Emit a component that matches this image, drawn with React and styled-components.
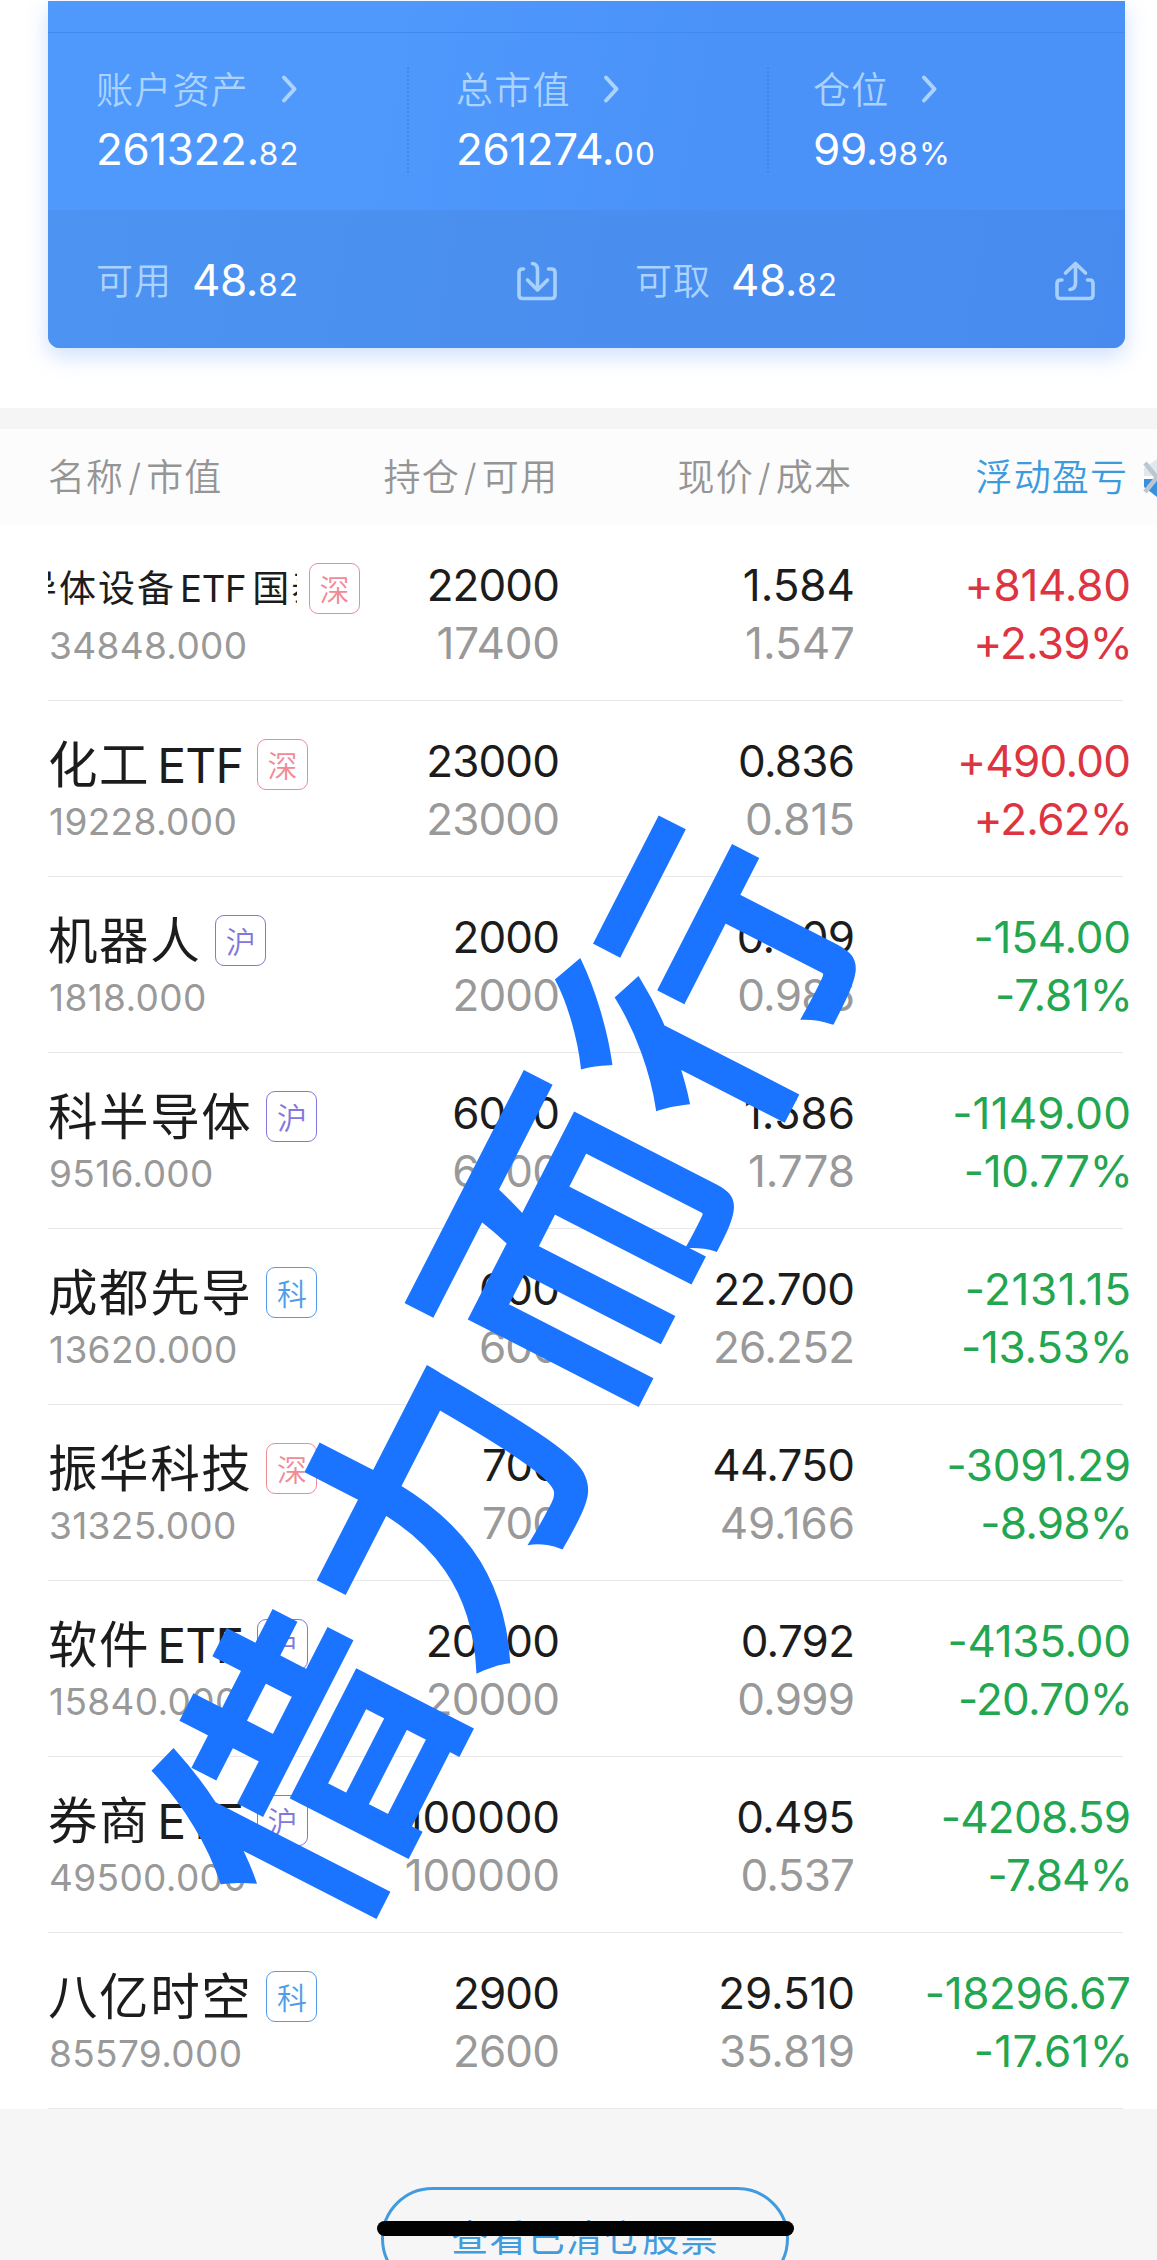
import React from "react";
import styled, { createGlobalStyle } from "styled-components";

const GlobalStyle = createGlobalStyle`
  *, *::before, *::after { box-sizing: border-box; }
  html, body { margin: 0; padding: 0; background: #fff; }
  body { overflow: hidden; }
`;

const Screen = styled.main`
  position: relative;
  width: 1157px;
  height: 2260px;
  overflow: hidden;
  display: flex;
  flex-direction: column;
  background: #f6f6f6;
  font-family: Inter, "Noto Sans CJK SC", sans-serif;
  color: #1c1c1c;
  white-space: nowrap;
`;

const Summary = styled.section`
  height: 408px;
  flex: none;
  padding: 1px 32px 0 48px;
  background: #fff;
`;

const Card = styled.div`
  height: 347px;
  border-radius: 0 0 12px 12px;
  overflow: hidden;
  background: linear-gradient(100deg, #4f99fd 0%, #4f98fc 30%, #4a92f8 60%, #4a91f8 100%);
  box-shadow: 0 8px 22px rgba(74, 140, 245, 0.28);
`;

const CardStrip = styled.div`
  height: 32px;
  border-bottom: 1px solid #4389ec;
`;

const Stats = styled.div`
  height: 177px;
  display: grid;
  grid-template-columns: 361px 360px 1fr;
  padding-top: 34px;
`;

const Stat = styled.div`
  height: 106px;
  padding-left: ${(p) => p.$inset}px;
  display: flex;
  flex-direction: column;
  border-right: ${(p) => (p.$last ? "0" : "2px dotted rgba(50, 120, 225, 0.5)")};
`;

const StatLabel = styled.div`
  display: flex;
  align-items: center;
  height: 42px;
  font-size: 37px;
  font-weight: 350;
  letter-spacing: 1.2px;
  color: #abd3fe;
  svg { margin-left: 32px; margin-top: 2px; }
`;

const Amount = styled.div`
  font-size: 44px;
  line-height: 50px;
  letter-spacing: -0.4px;
  color: #fff;
  padding-top: ${(p) => p.$top || 0}px;
  small { font-size: 31.5px; letter-spacing: 1px; }
`;

const Funds = styled.div`
  height: 138px;
  display: grid;
  grid-template-columns: 539px 1fr;
  background: linear-gradient(100deg, #4c93f2 0%, #4a8fee 45%, #488bf0 100%);
`;

const Fund = styled.div`
  display: flex;
  align-items: center;
  padding: 3px 30px 0 48px;
  svg { margin-left: auto; }
`;

const FundLabel = styled.span`
  width: 96px;
  font-size: 37px;
  line-height: 50px;
  padding-top: 2px;
  font-weight: 350;
  letter-spacing: 1.1px;
  color: #abd3fe;
`;

const Divider = styled.div`
  height: 21px;
  flex: none;
  background: #f5f5f5;
`;

const columns = "312px 199px 295px 276px";

const TableHead = styled.div`
  height: 96px;
  flex: none;
  display: grid;
  grid-template-columns: ${columns} 1fr;
  align-items: center;
  padding: 0 0 4px 48px;
  background: #fcfcfc;
  font-size: 37px;
  font-weight: 350;
  letter-spacing: 1.1px;
  color: #959595;
`;

const HeadCell = styled.div`
  text-align: ${(p) => p.$align || "right"};
  color: ${(p) => (p.$active ? "#3d9bdc" : "inherit")};
  padding-right: ${(p) => p.$inset || 0}px;
  i { font-style: normal; margin: 0 4px; }
`;

const HeadIcon = styled.div`
  display: flex;
  justify-content: flex-end;
  margin-top: 5px;
`;

const Rows = styled.div`
  flex: none;
  background: #fff;
`;

const Row = styled.div`
  height: 176px;
  display: grid;
  grid-template-columns: ${columns};
  padding-left: 48px;
  background: linear-gradient(#e8e8e8, #e8e8e8) 48px 175px / 1075px 1px no-repeat;
`;

const Holding = styled.div`
  padding-top: 34px;
`;

const NameLine = styled.div`
  display: flex;
  align-items: center;
  height: 58px;
`;

const Name = styled.div`
  font-size: 49.5px;
  letter-spacing: 1.6px;
  line-height: 58px;
  padding-top: 2px;
  margin-right: 14px;
  b { font-weight: 400; font-size: 48px; letter-spacing: -0.8px; margin-left: 7px; }
`;

const Ticker = styled.div`
  width: 249px;
  margin-right: 12px;
  padding-top: 2px;
  overflow: hidden;
  font-size: 37px;
  line-height: 58px;
  letter-spacing: 2px;
  span { display: inline-block; margin-left: -67px; }
  b { font-weight: 400; font-size: 36.5px; letter-spacing: -0.3px; margin: 0 6px 0 4px; }
`;

const badgeColors = { 深: "#ef8b96", 沪: "#8177dc", 科: "#529ce8" };

const Badge = styled.span`
  width: 51px;
  height: 51px;
  flex: none;
  display: flex;
  align-items: center;
  justify-content: center;
  border: 1.6px solid currentColor;
  border-radius: 9px;
  font-size: 30px;
  font-weight: 350;
  color: ${(p) => badgeColors[p.$kind]};
`;

const MarketValue = styled.div`
  font-size: 37px;
  line-height: 58px;
  letter-spacing: 0.35px;
  padding-left: 1px;
  color: #999;
`;

const Figures = styled.div`
  padding-top: 31px;
  text-align: right;
  font-size: 44px;
  line-height: 58px;
  color: ${(p) => p.$color || "#1c1c1c"};
`;

const Figure = styled.div`
  letter-spacing: ${(p) => p.$tracking}px;
  margin-right: ${(p) => p.$hang - p.$tracking}px;
  color: ${(p) => (p.$muted ? "#999" : "inherit")};
`;

const Footer = styled.footer`
  flex: 1;
  display: flex;
  justify-content: center;
  align-items: flex-start;
  padding: 78px 0 0 13px;
`;

const ClearedButton = styled.button`
  flex: none;
  width: 408px;
  height: 103px;
  border: 3px solid #429bdc;
  border-radius: 52px;
  background: transparent;
  font: 400 37px/96px Inter, "Noto Sans CJK SC", sans-serif;
  letter-spacing: 1.2px;
  color: #429bdc;
  padding: 0;
`;

const HomeIndicator = styled.div`
  position: absolute;
  left: 377px;
  top: 2221px;
  width: 417px;
  height: 15px;
  border-radius: 8px;
  background: #020202;
`;

const Watermark = styled.div`
  position: absolute;
  left: 494px;
  top: 1362px;
  font-size: 284px;
  line-height: 1;
  letter-spacing: 11px;
  font-weight: 500;
  -webkit-text-stroke: 5px #1a74ff;
  font-family: "Noto Sans CJK SC", sans-serif;
  color: #1a74ff;
  transform: translate(-50%, -50%) rotate(-62.9deg);
`;

const Chevron = () => (
  <svg width="17" height="30" viewBox="0 0 17 30" fill="none" stroke="#abd3fe" strokeWidth="4" strokeLinecap="round" strokeLinejoin="round">
    <path d="M3 3.5 13.5 15 3 26.5" />
  </svg>
);

const DepositIcon = () => (
  <svg width="40" height="40" viewBox="0 0 40 40" fill="none" stroke="#a8d0fd" strokeWidth="3.6" strokeLinecap="round" strokeLinejoin="round">
    <path d="M6.5 8H5.5Q2 8 2 11.5V34Q2 37.5 5.5 37.5H34.5Q38 37.5 38 34V11.5Q38 8 34.5 8H31.5" />
    <path d="M15.5 2.500Q20.500 3 20.500 9V29M10.500 19 20.500 29 30.500 19" />
  </svg>
);

const WithdrawIcon = () => (
  <svg width="40" height="40" viewBox="0 0 40 40" fill="none" stroke="#a8d0fd" strokeWidth="3.6" strokeLinecap="round" strokeLinejoin="round">
    <path d="M7 19H5.5Q2 19 2 22.5V34Q2 37.5 5.5 37.5H34.5Q38 37.5 38 34V22.5Q38 19 34.5 19H32.5" />
    <path d="M10.5 12 20.5 2.5 30.5 12M20.5 3V22Q20.5 28 15 28.5" />
  </svg>
);

const SortIcon = () => (
  <svg width="14" height="38" viewBox="0 0 14 38">
    <path d="M1 17V9L14 0V17Z" fill="#e3e8ee" />
    <path d="M1 20H14V38L1 28Z" fill="#3b8fdc" />
    <path d="M2 4 14 18.500 2 33" fill="none" stroke="#bcc5d2" strokeWidth="4.500" />
  </svg>
);

const RED = "#dc3440";
const GREEN = "#23a650";

// The digit 1 is narrow in Inter; open the tracking in proportion to how many there are.
const tracking = (text) => {
  const ones = text.split("1").length - 1;
  const base = text.includes(".") ? -0.75 : -0.9;
  return base + (3.6 * ones) / text.length;
};

const Num = ({ children, muted }) => (
  <Figure $tracking={tracking(children)} $hang={children.endsWith("%") ? -3 : -1} $muted={muted}>
    {children}
  </Figure>
);

const holdings = [
  { ticker: ["半导体设备", "ETF", "国泰"], kind: "深", value: "34848.000", qty: ["22000", "17400"], price: ["1.584", "1.547"], pl: ["+814.80", "+2.39%"] },
  { name: "化工", suffix: "ETF", kind: "深", value: "19228.000", qty: ["23000", "23000"], price: ["0.836", "0.815"], pl: ["+490.00", "+2.62%"] },
  { name: "机器人", kind: "沪", value: "1818.000", qty: ["2000", "2000"], price: ["0.909", "0.986"], pl: ["-154.00", "-7.81%"] },
  { name: "科半导体", kind: "沪", value: "9516.000", qty: ["6000", "6000"], price: ["1.586", "1.778"], pl: ["-1149.00", "-10.77%"] },
  { name: "成都先导", kind: "科", value: "13620.000", qty: ["600", "600"], price: ["22.700", "26.252"], pl: ["-2131.15", "-13.53%"] },
  { name: "振华科技", kind: "深", value: "31325.000", qty: ["700", "700"], price: ["44.750", "49.166"], pl: ["-3091.29", "-8.98%"] },
  { name: "软件", suffix: "ETF", kind: "沪", value: "15840.000", qty: ["20000", "20000"], price: ["0.792", "0.999"], pl: ["-4135.00", "-20.70%"] },
  { name: "券商", suffix: "ETF", kind: "沪", value: "49500.000", qty: ["100000", "100000"], price: ["0.495", "0.537"], pl: ["-4208.59", "-7.84%"] },
  { name: "八亿时空", kind: "科", value: "85579.000", qty: ["2900", "2600"], price: ["29.510", "35.819"], pl: ["-18296.67", "-17.61%"] },
];

const stats = [
  { label: "账户资产", whole: "261322.", rest: "82", inset: 48 },
  { label: "总市值", whole: "261274.", rest: "00", inset: 47 },
  { label: "仓位", whole: "99.", rest: "98%", inset: 44 },
];

export default function App() {
  return (
    <Screen>
      <GlobalStyle />
      <Summary>
        <Card>
          <CardStrip />
          <Stats>
            {stats.map((s, i) => (
              <Stat key={s.label} $inset={s.inset} $last={i === 2}>
                <StatLabel>{s.label}<Chevron /></StatLabel>
                <Amount $top={15}>{s.whole}<small>{s.rest}</small></Amount>
              </Stat>
            ))}
          </Stats>
          <Funds>
            <Fund>
              <FundLabel>可用</FundLabel>
              <Amount $top={4}>48.<small>82</small></Amount>
              <DepositIcon />
            </Fund>
            <Fund>
              <FundLabel>可取</FundLabel>
              <Amount $top={4}>48.<small>82</small></Amount>
              <WithdrawIcon />
            </Fund>
          </Funds>
        </Card>
      </Summary>
      <Divider />
      <TableHead>
        <HeadCell $align="left">名称<i>/</i>市值</HeadCell>
        <HeadCell $inset={1}>持仓<i>/</i>可用</HeadCell>
        <HeadCell $inset={2}>现价<i>/</i>成本</HeadCell>
        <HeadCell $active $inset={2}>浮动盈亏</HeadCell>
        <HeadIcon><SortIcon /></HeadIcon>
      </TableHead>
      <Rows>
        {holdings.map((h) => (
          <Row key={h.value}>
            <Holding>
              <NameLine>
                {h.ticker ? (
                  <Ticker><span>{h.ticker[0]}<b>{h.ticker[1]}</b>{h.ticker[2]}</span></Ticker>
                ) : (
                  <Name>{h.name}{h.suffix && <b>{h.suffix}</b>}</Name>
                )}
                <Badge $kind={h.kind}>{h.kind}</Badge>
              </NameLine>
              <MarketValue>{h.value}</MarketValue>
            </Holding>
            <Figures><Num>{h.qty[0]}</Num><Num muted>{h.qty[1]}</Num></Figures>
            <Figures><Num>{h.price[0]}</Num><Num muted>{h.price[1]}</Num></Figures>
            <Figures $color={h.pl[0][0] === "+" ? RED : GREEN}><Num>{h.pl[0]}</Num><Num>{h.pl[1]}</Num></Figures>
          </Row>
        ))}
      </Rows>
      <Footer>
        <ClearedButton>查看已清仓股票</ClearedButton>
      </Footer>
      <Watermark>借力而行</Watermark>
      <HomeIndicator />
    </Screen>
  );
}
